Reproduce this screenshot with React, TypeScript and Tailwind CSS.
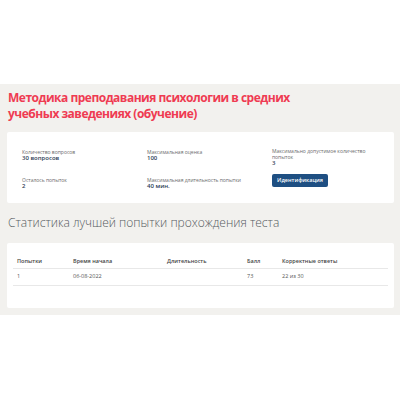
export default function App() {
  const info = [
    [
      { label: 'Количество вопросов', value: '30 вопросов' },
      { label: 'Осталось попыток', value: '2' },
    ],
    [
      { label: 'Максимальная оценка', value: '100' },
      { label: 'Максимальная длительность попытки', value: '40 мин.' },
    ],
  ];

  return (
    <div className="w-[400px] h-[400px] bg-white" style={{ fontFamily: '"Open Sans", sans-serif' }}>
      <div className="h-[84px]" />
      <div className="bg-[#f2f1ee] pl-[7px] pr-[6px] pt-[6px] pb-[7px]">
        <h1 className="pl-[1px] text-[12px] leading-[16px] font-bold tracking-[-0.5px] text-[#ef3b52]">
          Методика преподавания психологии в средних
          <br />
          учебных заведениях (обучение)
        </h1>

        <div className="mt-[10px] bg-white rounded-[2px] h-[71px] pl-[15px] pt-[17px] grid grid-cols-[125px_125px_1fr]">
          {info.map((col, i) => (
            <div key={i} className="flex flex-col gap-[12px]">
              {col.map((it) => (
                <div key={it.label} className="h-[16px]">
                  <div className="text-[5px] leading-[6px] text-[#6b6b6b]">{it.label}</div>
                  <div className="text-[6px] leading-[7px] font-semibold text-[#2e3e55]">{it.value}</div>
                </div>
              ))}
            </div>
          ))}
          <div className="flex flex-col">
            <div className="h-[25px]">
              <div className="text-[5px] leading-[5.5px] text-[#6b6b6b] w-[104px]">
                Максимально допустимое количество попыток
              </div>
              <div className="text-[6px] leading-[7px] font-semibold text-[#2e3e55]">3</div>
            </div>
            <button className="w-[56px] h-[13px] rounded-[2px] bg-[#1e4f82] text-white text-[5.5px] font-semibold leading-none">
              Идентификация
            </button>
          </div>
        </div>

        <h2 className="mt-[12px] pl-[1px] text-[12px] leading-[16px] text-[#555a60] font-light">
          Статистика лучшей попытки прохождения теста
        </h2>

        <div className="mt-[12px] bg-white rounded-[2px] h-[65px] px-[6px] pt-[12px]">
          <table className="w-full table-fixed text-[5.5px] text-[#555]">
            <colgroup>
              <col className="w-[60px]" />
              <col className="w-[94px]" />
              <col className="w-[80px]" />
              <col className="w-[35px]" />
              <col />
            </colgroup>
            <thead>
              <tr className="h-[13px] border-b border-[#e8e8e8] font-semibold text-[#444]">
                <td className="pl-[4px]">Попытки</td>
                <td>Время начала</td>
                <td>Длительность</td>
                <td>Балл</td>
                <td>Корректные ответы</td>
              </tr>
            </thead>
            <tbody>
              <tr className="h-[17px] border-b border-[#e8e8e8]">
                <td className="pl-[4px]">1</td>
                <td>06-08-2022</td>
                <td></td>
                <td>73</td>
                <td>22 из 30</td>
              </tr>
            </tbody>
          </table>
        </div>
      </div>
    </div>
  );
}
